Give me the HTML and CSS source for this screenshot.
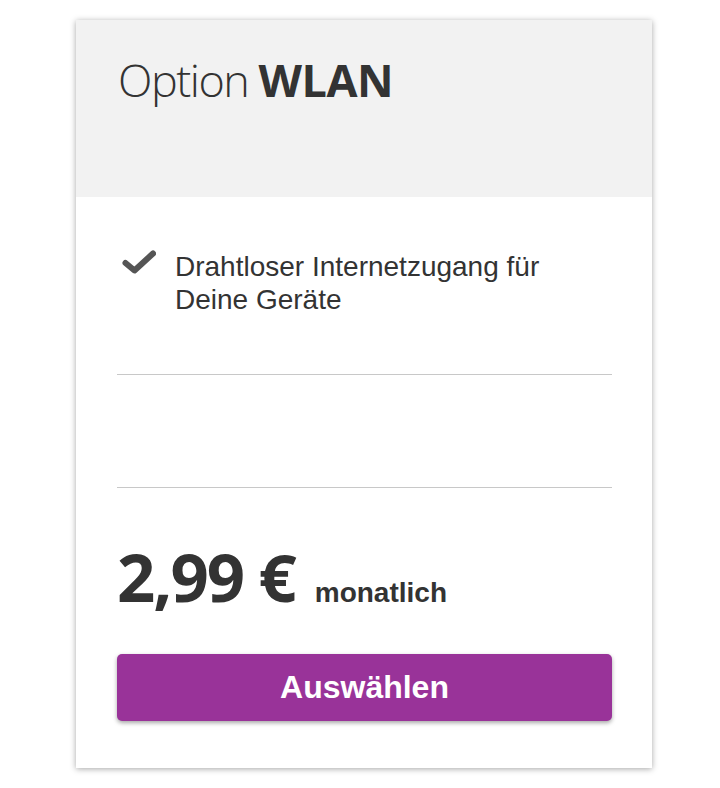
FILE: index.html
```html
<!DOCTYPE html>
<html lang="de">
<head>
<meta charset="utf-8">
<link rel="stylesheet" href="styles.css">
</head>
<body>
<div class="page">
  <div class="card">
    <div class="card-head">
      <h2 class="title"><span class="light">Option</span> <span class="strong">WLAN</span></h2>
    </div>
    <div class="card-body">
      <ul class="features">
        <li class="feature">
          <svg class="check" viewBox="0 0 36 24" width="36" height="24" aria-hidden="true">
            <path d="M4.5 13 L13.5 20.5 L32 3.5" fill="none" stroke="#555" stroke-width="6" stroke-linecap="round" stroke-linejoin="round"/>
          </svg>
          <span class="feature-text">Drahtloser Internetzugang für Deine Geräte</span>
        </li>
      </ul>
      <hr class="divider">
      <div class="spacer"></div>
      <hr class="divider">
      <div class="price-row">
        <span class="price">2,99&nbsp;€</span>
        <span class="period">monatlich</span>
      </div>
      <button class="btn">Auswählen</button>
    </div>
  </div>
</div>
</body>
</html>
```

FILE: styles.css
```css
html, body {
  margin: 0;
  padding: 0;
  background: #fff;
}

.page {
  padding: 20px 68px 20px 76px;
}

.card {
  width: 576px;
  height: 748px;
  background: #fff;
  box-shadow: 0 1px 6px rgba(0, 0, 0, 0.35);
  display: flex;
  flex-direction: column;
}

.card-head {
  background: #f2f2f2;
  height: 177px;
  padding: 0 42px;
  box-sizing: border-box;
}

.title {
  margin: 0;
  padding-top: 33px;
  font-size: 45px;
  line-height: 1.2;
  color: #333;
  font-family: "Open Sans", "DejaVu Sans", sans-serif;
  letter-spacing: -1.5px;
  font-weight: normal;
}

.title .light {
  font-weight: 300;
}

.title .strong {
  font-weight: 700;
  letter-spacing: -0.5px;
}

.card-body {
  padding: 0 40px 0 41px;
  display: flex;
  flex-direction: column;
}

.features {
  list-style: none;
  margin: 0;
  padding: 0;
}

.feature {
  display: flex;
  align-items: flex-start;
  padding-top: 53px;
  height: 177px;
  box-sizing: border-box;
}

.check {
  flex: none;
  margin: 0 18px 0 4px;
  filter: blur(0.6px);
}

.feature-text {
  font-family: "Liberation Sans", Arial, sans-serif;
  font-size: 28px;
  line-height: 33px;
  color: #333;
  max-width: 380px;
}

.divider {
  margin: 0;
  border: 0;
  border-top: 1px solid #c8c8c8;
  height: 0;
}

.spacer {
  height: 112px;
}

.price-row {
  display: flex;
  align-items: baseline;
  padding-top: 48px;
  height: 166px;
  box-sizing: border-box;
  color: #333;
}

.price {
  font-family: "Open Sans", "DejaVu Sans", sans-serif;
  font-weight: 700;
  font-size: 67px;
  line-height: 80px;
  letter-spacing: -2px;
}

.period {
  font-family: "Liberation Sans", Arial, sans-serif;
  font-weight: 700;
  font-size: 28px;
  margin-left: 20px;
}

.btn {
  display: block;
  width: 100%;
  height: 67px;
  border: 0;
  border-radius: 5px;
  background: #993399;
  color: #fff;
  font-family: "Liberation Sans", Arial, sans-serif;
  font-weight: 700;
  font-size: 32px;
  box-shadow: 0 2px 4px rgba(0, 0, 0, 0.35);
  cursor: pointer;
}
```
